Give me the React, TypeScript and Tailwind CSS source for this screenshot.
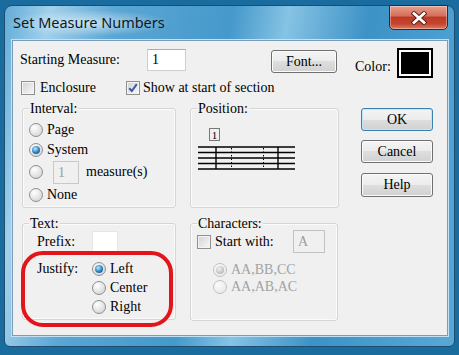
function Radio({ checked, disabled }: { checked?: boolean; disabled?: boolean }) {
  return (
    <span
      className={`flex h-[14px] w-[14px] shrink-0 items-center justify-center rounded-full border ${
        disabled
          ? "border-[#c2c2c2] bg-[radial-gradient(circle_at_35%_30%,#fbfbfb,#e4e4e4)]"
          : "border-[#8f8f8f] bg-[radial-gradient(circle_at_35%_30%,#ffffff,#cdcdcd)]"
      }`}
    >
      {checked && (
        <span
          className={`h-[8px] w-[8px] rounded-full ${
            disabled
              ? "bg-[radial-gradient(circle_at_40%_35%,#f2f2f2,#a6a6a6)]"
              : "bg-[radial-gradient(circle_at_40%_35%,#b9ecff,#2a7fbf_55%,#0c3c68)]"
          }`}
        />
      )}
    </span>
  )
}

function Check({ checked }: { checked?: boolean }) {
  return (
    <span className="flex h-[14px] w-[14px] shrink-0 items-center justify-center border border-[#8f8f8f] bg-[linear-gradient(135deg,#d2d2d2,#f8f8f8)] shadow-[inset_0_0_0_1px_#f4f4f4]">
      {checked && (
        <svg width="12" height="12" viewBox="0 0 12 12">
          <path d="M2.2 6.2 L4.8 9 L9.8 2.2" fill="none" stroke="#3559a4" strokeWidth="2" />
        </svg>
      )}
    </span>
  )
}

function Btn({ children, def, className }: { children: React.ReactNode; def?: boolean; className: string }) {
  return (
    <div
      className={`flex items-center justify-center rounded-[3px] border bg-[linear-gradient(#f4f4f4_0%,#ececec_50%,#dedede_50%,#d1d1d1_100%)] ${
        def
          ? "border-[#3c7fb1] shadow-[inset_0_0_0_1px_#bfe6fb]"
          : "border-[#707070] shadow-[inset_0_0_0_1px_#fbfbfb]"
      } ${className}`}
    >
      {children}
    </div>
  )
}

function Group({ label, className, children }: { label: string; className: string; children?: React.ReactNode }) {
  return (
    <div className={`relative rounded-[3px] border border-[#d5d5d5] shadow-[inset_0_0_0_1px_#fbfbfb] ${className}`}>
      <span className="absolute -top-[8px] left-[6px] bg-[#f0f0f0] px-px leading-4">{label}</span>
      {children}
    </div>
  )
}

function Staff() {
  const lines = [21, 26.5, 32, 37.5, 43]
  return (
    <svg width="110" height="46" className="mt-[17px] block">
      <rect x="18.5" y="2.5" width="10" height="12" fill="none" stroke="#000" strokeDasharray="1 1" />
      <text x="23.5" y="12.5" fontSize="11" textAnchor="middle" fontFamily="Liberation Serif">
        1
      </text>
      {lines.map((y) => (
        <line key={y} x1="7" x2="104" y1={y} y2={y} stroke="#000" strokeWidth="1.6" />
      ))}
      <line x1="25" x2="25" y1="21" y2="43" stroke="#000" strokeWidth="1.4" />
      <line x1="87" x2="87" y1="21" y2="43" stroke="#000" strokeWidth="1.4" />
      <line x1="40.5" x2="40.5" y1="22" y2="43" stroke="#000" strokeWidth="1" strokeDasharray="1.5 2" />
      <line x1="72.5" x2="72.5" y1="22" y2="43" stroke="#000" strokeWidth="1" strokeDasharray="1.5 2" />
    </svg>
  )
}

export default function App() {
  return (
    <div className="h-[355px] w-[459px] overflow-hidden bg-[#1a6b9e] pl-[4px] pt-[5px]">
      <div className="flex h-[342px] w-[451px] flex-col rounded-t-[8px] rounded-b-[6px] border border-[#1d4e72] bg-[linear-gradient(100deg,#62acd8_0%,#a2d0ea_9%,#5aa6d4_22%,#4599cb_45%,#86c3e4_56%,#3d92c6_72%,#58a8d7_100%)]">
        {/* Title bar */}
        <div className="flex h-[34px] items-center justify-between">
          <span className="ml-[4px] rounded-full bg-[radial-gradient(ellipse_at_center,rgba(255,255,255,0.6),rgba(255,255,255,0)_72%)] px-[4px] py-[2px] [font-family:Noto_Sans,sans-serif] text-[14.5px] text-[#101820]">
            Set Measure Numbers
          </span>
          <div className="-mt-px mr-[6px] flex h-[25px] w-[59px] items-center justify-center self-start rounded-b-[5px] border border-[#5b1a12] bg-[linear-gradient(#e6a08f_0%,#d66f5a_42%,#bd3b26_50%,#c44630_78%,#e07a60_100%)] shadow-[inset_0_0_0_1px_rgba(255,255,255,0.35)]">
            <svg width="16" height="14" viewBox="0 0 16 14">
              <path d="M3 2.5 L13 11.5 M13 2.5 L3 11.5" stroke="#5a1c14" strokeWidth="4.6" strokeLinecap="square" />
              <path d="M3 2.5 L13 11.5 M13 2.5 L3 11.5" stroke="#fff" strokeWidth="2.8" strokeLinecap="square" />
            </svg>
          </div>
        </div>

        {/* Client area */}
        <div className="ml-[7px] h-[296px] w-[436px] border border-[#7a9cb7] bg-[#f0f0f0] [font-family:Liberation_Serif,serif] text-[14px] leading-4 text-black shadow-[0_0_0_1px_#c4e1f3]">
          <div className="flex h-[37px] items-start pt-[7px]">
            <span className="ml-[7px] mt-[4px] w-[127px]">Starting Measure:</span>
            <div className="mt-px h-[22px] w-[39px] border border-[#cfcfcf] border-t-[#abadb3] bg-white pl-[4px] leading-[20px]">1</div>
            <Btn className="ml-[85px] mt-[2px] h-[23px] w-[66px]">Font...</Btn>
            <span className="ml-[18px] mt-[11px] w-[41px]">Color:</span>
            <div className="ml-px h-[30px] w-[36px] border-2 border-black bg-white p-[2px]">
              <div className="h-full w-full bg-black" />
            </div>
          </div>

          <div className="mt-[2px] flex h-[16px] items-center">
            <div className="ml-[8px] flex w-[105px] items-center">
              <Check />
              <span className="ml-[5px]">Enclosure</span>
            </div>
            <Check checked />
            <span className="ml-[3px]">Show at start of section</span>
          </div>

          <div className="mt-[12px] flex items-start">
            <Group label="Interval:" className="ml-[9px] h-[100px] w-[154px]">
              <div className="flex flex-col pl-[6px] pt-[12px]">
                <div className="flex h-[18px] items-center gap-[4px]">
                  <Radio />
                  <span>Page</span>
                </div>
                <div className="flex h-[22px] items-center gap-[4px]">
                  <Radio checked />
                  <span>System</span>
                </div>
                <div className="flex h-[22px] items-center">
                  <Radio />
                  <div className="ml-[10px] h-[23px] w-[26px] border border-[#c9c9c9] pl-[4px] leading-[21px] text-[#9d9d9d]">1</div>
                  <span className="ml-[7px]">measure(s)</span>
                </div>
                <div className="flex h-[24px] items-center gap-[4px]">
                  <Radio />
                  <span>None</span>
                </div>
              </div>
            </Group>
            <Group label="Position:" className="ml-[14px] h-[100px] w-[149px]">
              <Staff />
            </Group>
            <div className="ml-[22px] flex w-[72px] flex-col">
              <Btn def className="h-[23px]">OK</Btn>
              <Btn className="mt-[9px] h-[23px]">Cancel</Btn>
              <Btn className="mt-[10px] h-[24px]">Help</Btn>
            </div>
          </div>

          <div className="mt-[15px] flex items-start">
            <Group label="Text:" className="ml-[9px] h-[97px] w-[154px]">
              <div className="mt-[7px] flex h-[22px] items-center">
                <span className="w-[69px] pl-[14px]">Prefix:</span>
                <div className="h-[22px] w-[26px] border border-[#e6e6e6] bg-white" />
              </div>
              <div className="mt-[6px] flex">
                <span className="flex h-[19px] w-[69px] items-center pl-[14px]">Justify:</span>
                <div className="flex flex-col">
                  <div className="flex h-[19px] items-center gap-[4px]">
                    <Radio checked />
                    <span>Left</span>
                  </div>
                  <div className="flex h-[19px] items-center gap-[4px]">
                    <Radio />
                    <span>Center</span>
                  </div>
                  <div className="flex h-[19px] items-center gap-[4px]">
                    <Radio />
                    <span>Right</span>
                  </div>
                </div>
              </div>
              <div className="pointer-events-none absolute -left-[2px] top-[27px] h-[76px] w-[152px] rounded-[22px] border-4 border-[#e3151a]" />
            </Group>
            <Group label="Characters:" className="ml-[14px] h-[98px] w-[148px]">
              <div className="mt-[6px] flex h-[23px] items-center">
                <div className="ml-[6px] flex w-[96px] items-center">
                  <Check />
                  <span className="ml-[4px]">Start with:</span>
                </div>
                <div className="h-[23px] w-[32px] border border-[#c2c2c2] pl-[4px] leading-[21px] text-[#9d9d9d]">A</div>
              </div>
              <div className="mt-[8px] flex flex-col pl-[22px] text-[#a3a3a3]">
                <div className="flex h-[17px] items-center gap-[4px]">
                  <Radio checked disabled />
                  <span>AA,BB,CC</span>
                </div>
                <div className="flex h-[17px] items-center gap-[4px]">
                  <Radio disabled />
                  <span>AA,AB,AC</span>
                </div>
              </div>
            </Group>
          </div>
        </div>
      </div>
    </div>
  )
}
